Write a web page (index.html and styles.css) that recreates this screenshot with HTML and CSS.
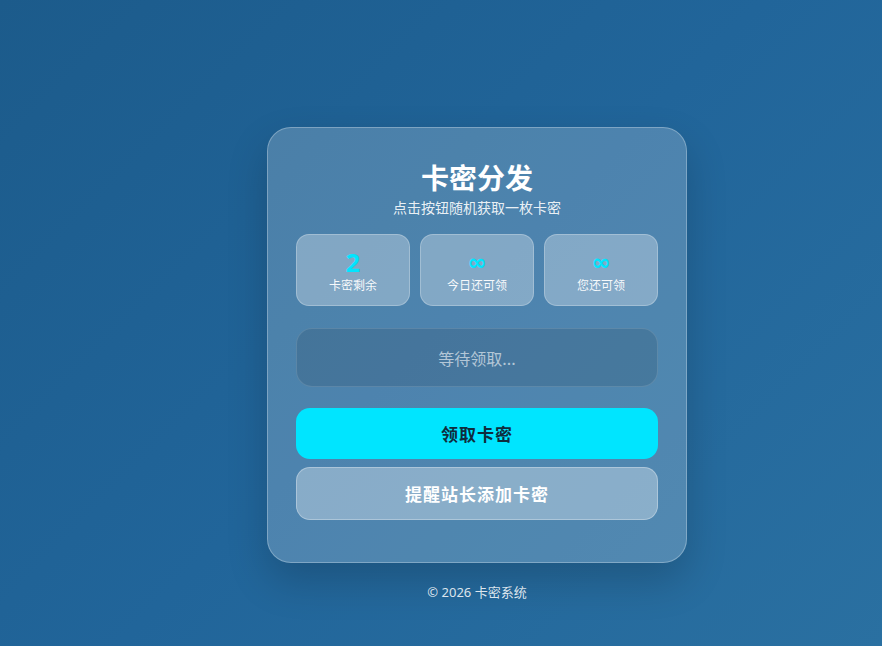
FILE: index.html
```html
<!DOCTYPE html>
<html lang="zh-CN">
<head>
<meta charset="utf-8">
<title>卡密分发</title>
<link rel="stylesheet" href="styles.css">
</head>
<body>
<main class="page">
  <section class="card">
    <h1 class="title">卡密分发</h1>
    <p class="subtitle">点击按钮随机获取一枚卡密</p>
    <div class="stats">
      <div class="stat">
        <div class="stat-num">2</div>
        <div class="stat-label">卡密剩余</div>
      </div>
      <div class="stat">
        <div class="stat-num inf">∞</div>
        <div class="stat-label">今日还可领</div>
      </div>
      <div class="stat">
        <div class="stat-num inf">∞</div>
        <div class="stat-label">您还可领</div>
      </div>
    </div>
    <div class="result">等待领取...</div>
    <button class="btn btn-primary">领取卡密</button>
    <button class="btn btn-secondary">提醒站长添加卡密</button>
  </section>
  <footer class="footer">© 2026 卡密系统</footer>
</main>
</body>
</html>
```

FILE: styles.css
```css
html, body {
  margin: 0;
  padding: 0;
  height: 100%;
}
body {
  background: linear-gradient(135deg, #1c5b8b 0%, #21659a 50%, #2a70a1 100%);
  font-family: "Noto Sans", "Noto Sans CJK SC", sans-serif;
  color: #fff;
  overflow: hidden;
}
.page {
  display: flex;
  flex-direction: column;
  align-items: center;
  padding: 127px 0 0 72px;
  box-sizing: border-box;
  height: 100%;
}
.card {
  width: 420px;
  box-sizing: border-box;
  padding: 32px 28px 42px;
  border-radius: 24px;
  background: rgba(255, 255, 255, 0.2);
  border: 1px solid rgba(255, 255, 255, 0.28);
  box-shadow: 0 18px 40px rgba(0, 0, 0, 0.18);
  display: flex;
  flex-direction: column;
}
.title {
  margin: 0;
  text-align: center;
  font-size: 28px;
  line-height: 34px;
  font-weight: 700;
  font-family: "Noto Sans CJK SC", sans-serif;
}
.subtitle {
  margin: 4px 0 0;
  text-align: center;
  font-size: 14px;
  line-height: 18px;
  color: rgba(255, 255, 255, 0.9);
  font-family: "Noto Sans CJK SC", sans-serif;
}
.stats {
  margin-top: 18px;
  display: grid;
  grid-template-columns: repeat(3, 1fr);
  gap: 10px;
}
.stat {
  height: 72px;
  box-sizing: border-box;
  border-radius: 13px;
  background: rgba(255, 255, 255, 0.3);
  border: 1px solid rgba(255, 255, 255, 0.25);
  display: flex;
  flex-direction: column;
  align-items: center;
  justify-content: center;
}
.stat-num {
  font-size: 25px;
  line-height: 27px;
  font-weight: 700;
  color: #00e5ff;
  font-family: "Noto Sans", sans-serif;
  margin-top: 2px;
}
.stat-num.inf {
  font-size: 23px;
  font-family: "DejaVu Sans", sans-serif;
  font-weight: 700;
}
.stat-label {
  margin-top: 1px;
  font-size: 12px;
  line-height: 16px;
  color: rgba(255, 255, 255, 0.95);
  font-family: "Noto Sans CJK SC", sans-serif;
}
.result {
  margin-top: 22px;
  height: 59px;
  box-sizing: border-box;
  border-radius: 16px;
  background: rgba(0, 0, 0, 0.1);
  border: 1px solid rgba(255, 255, 255, 0.12);
  display: flex;
  align-items: center;
  justify-content: center;
  font-size: 16px;
  color: rgba(255, 255, 255, 0.6);
  font-family: "Noto Sans CJK SC", sans-serif;
}
.btn {
  display: block;
  width: 100%;
  border-radius: 14px;
  font-size: 17px;
  letter-spacing: 1px;
  font-weight: 700;
  font-family: "Noto Sans CJK SC", sans-serif;
  cursor: pointer;
  box-sizing: border-box;
}
.btn-primary {
  margin-top: 21px;
  height: 51px;
  border: none;
  background: #00e5ff;
  color: #0f2d3d;
}
.btn-secondary {
  margin-top: 8px;
  height: 53px;
  background: rgba(255, 255, 255, 0.33);
  border: 1px solid rgba(255, 255, 255, 0.3);
  color: #fff;
}
.footer {
  margin-top: 20px;
  font-size: 13px;
  line-height: 18px;
  color: rgba(255, 255, 255, 0.85);
}
```
